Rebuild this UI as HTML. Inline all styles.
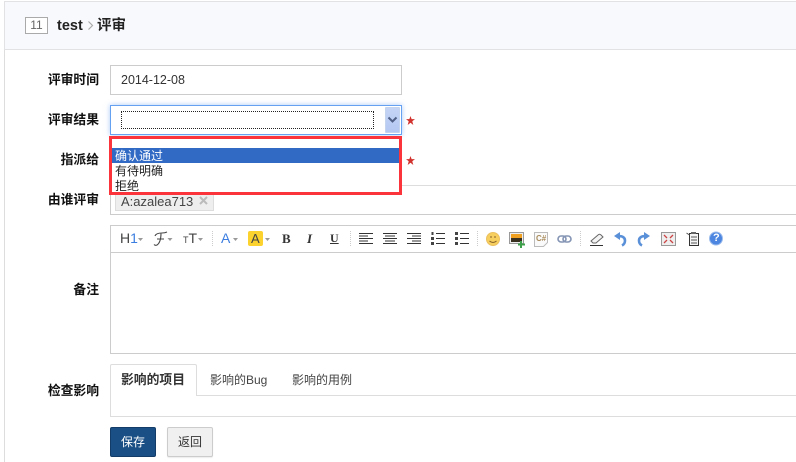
<!DOCTYPE html>
<html>
<head>
<meta charset="utf-8">
<style>
html,body{margin:0;padding:0;background:#fff}
body{width:796px;height:462px;position:relative;overflow:hidden;font-family:"Liberation Sans","Noto Sans CJK SC",sans-serif;font-size:12px;color:#333}
.a{position:absolute;box-sizing:border-box}
.l{position:absolute;font-weight:bold;color:#111;font-size:12.800px;line-height:16px;white-space:nowrap;right:697px}
.t{position:absolute;white-space:nowrap}
.ic{position:absolute;top:0;left:0}
</style>
</head>
<body>
<div class="a" style="left:4px;top:1px;width:792px;height:49px;background:#f8f9fd;border:1px solid #e2e2e4;border-right:0"></div>
<div class="a" style="left:4px;top:50px;width:1px;height:412px;background:#ddd"></div>
<div class="a" style="left:25px;top:17px;width:23px;height:17px;border:1px solid #aaa;background:#fff;color:#666;font-size:12px;line-height:15px;text-align:center">11</div>
<div class="t" style="left:57px;top:17px;font-size:14.500px;line-height:18px;font-weight:bold;color:#222">test</div>
<svg class="a" style="left:87px;top:20px" width="8" height="11" viewBox="0 0 8 11"><path d="M1.500 1.500L5.500 5.500L1.500 9.500" fill="none" stroke="#aaa" stroke-width="1.200"/></svg>
<div class="t" style="left:97px;top:17px;font-size:14.500px;line-height:18px;font-weight:bold;color:#222">评审</div>

<div class="l" style="top:72px">评审时间</div>
<div class="a" style="left:110px;top:65px;width:292px;height:30px;border:1px solid #ccc;background:#fff;font-size:12.500px;line-height:28px;padding-left:10px;color:#333">2014-12-08</div>

<div class="l" style="top:112px">评审结果</div>
<div class="a" style="left:110px;top:105px;width:292px;height:30px;border:1px solid #66a0f0;background:#fff;box-shadow:0 0 5px rgba(102,160,240,.55)"></div>
<div class="a" style="left:121px;top:111px;width:253px;height:18px;border:1px dotted #222"></div>
<div class="a" style="left:385px;top:107px;width:15px;height:26px;background:linear-gradient(#c4d4f6,#b4c8f2);border:1px solid #c4d3ee;border-radius:1px"></div>
<svg class="a" style="left:387px;top:116px" width="11" height="8" viewBox="0 0 11 8"><path d="M1.500 1.500L5.500 5.500L9.500 1.500" fill="none" stroke="#4f5f85" stroke-width="2"/></svg>
<svg class="a" style="left:406px;top:116px" width="9" height="9" viewBox="0 0 8 8"><path d="M4 0L5 2.800H8L5.600 4.700L6.500 8L4 6L1.500 8L2.400 4.700L0 2.800H3z" fill="#d2322d"/></svg>

<div class="l" style="top:152px">指派给</div>
<svg class="a" style="left:406px;top:156px" width="9" height="9" viewBox="0 0 8 8"><path d="M4 0L5 2.800H8L5.600 4.700L6.500 8L4 6L1.500 8L2.400 4.700L0 2.800H3z" fill="#d2322d"/></svg>
<div class="a" style="left:402px;top:185px;width:394px;height:1px;background:#ddd"></div>

<div class="a" style="left:109px;top:136px;width:293px;height:59px;background:#fff"></div>
<div class="a" style="left:112px;top:148px;width:287px;height:15px;background:#316ac5"></div>
<div class="t" style="left:115px;top:149px;font-size:12px;line-height:15px;color:#fff">确认通过</div>
<div class="t" style="left:115px;top:164px;font-size:12px;line-height:15px;color:#222">有待明确</div>
<div class="t" style="left:115px;top:179px;font-size:12px;line-height:15px;color:#222">拒绝</div>

<div class="l" style="top:192px">由谁评审</div>
<div class="a" style="left:110px;top:195px;width:686px;height:20px;border-left:1px solid #ccc;border-bottom:1px solid #ccc"></div>
<div class="a" style="left:115px;top:192px;width:99px;height:19px;background:#eee;border:1px solid #ddd;font-size:13px;line-height:17px;padding-left:5px;color:#444;overflow:hidden">A:azalea713</div>
<svg class="a" style="left:199px;top:196px" width="9" height="9" viewBox="0 0 9 9"><path d="M1 1L8 8M8 1L1 8" stroke="#bbb" stroke-width="2"/></svg>
<div class="a" style="left:109px;top:136px;width:293px;height:59px;border:3px solid #fb333a"></div>

<div class="l" style="top:282px">备注</div>
<div class="a" style="left:110px;top:225px;width:686px;height:129px;border:1px solid #ccc;border-right:0"></div>
<div class="a" style="left:111px;top:252px;width:685px;height:1px;background:#ccc"></div>

<!-- toolbar -->
<div class="t" style="left:120px;top:230px;font-size:14px;line-height:16px;color:#444">H<span style="color:#3b7de0">1</span></div>
<svg class="ic" width="796" height="462" style="pointer-events:none">
<g fill="#999">
<path d="M138 238h5l-2.500 3z"/><path d="M167.500 238h5l-2.500 3z"/><path d="M198 238h5l-2.500 3z"/><path d="M233 238h5l-2.500 3z"/><path d="M265 238h5l-2.500 3z"/>
</g>
<path d="M155 236c1-3 5-3 7-3s3 0 5-1M161 233c0 5-1 10-4 12-1 .5-2 .5-3-.5M157 239h7" fill="none" stroke="#444" stroke-width="1.100"/>
<g stroke="#ccc" stroke-dasharray="1 1" stroke-width="1"><path d="M212.500 231v16M350.500 231v16M477.500 231v16M580.500 231v16"/></g>
<rect x="248" y="231" width="15" height="15" rx="2" fill="#fcd22e"/>
<g stroke="#333" stroke-width="1" fill="none">
<path d="M359 233.500h14M359 236h9M359 238.500h14M359 241h9M359 243.500h14"/>
<path d="M383 233.500h14M385 236h10M383 238.500h14M385 241h10M383 243.500h14"/>
<path d="M407 233.500h14M412 236h9M407 238.500h14M412 241h9M407 243.500h14"/>
<path d="M436 233.500h9M436 238.500h9M436 243.500h9"/>
<path d="M460 233.500h9M460 238.500h9M460 243.500h9"/>
</g>
<g fill="#444"><rect x="431.500" y="232" width="2" height="3"/><rect x="431" y="237" width="3" height="3"/><rect x="431" y="242" width="3" height="3"/><rect x="455" y="232" width="3" height="3"/><rect x="455" y="237" width="3" height="3"/><rect x="455" y="242" width="3" height="3"/></g>
<circle cx="493" cy="239" r="6.500" fill="#f6cf5e" stroke="#ecc060" stroke-width="1"/>
<path d="M489.500 241q3.500 3 7 0" fill="none" stroke="#85602a"/><path d="M491 236v2M495 236v2" stroke="#85602a"/>
<rect x="509.500" y="232.500" width="14" height="11" fill="#eee" stroke="#999"/>
<rect x="511" y="234" width="11" height="4" fill="#f0a020"/><rect x="511" y="238" width="11" height="4" fill="#3a3020"/>
<path d="M521 241v7M518 244.500h7" stroke="#3ea04a" stroke-width="2"/>
<path d="M534.500 232.500h13v10l-4 4h-9z" fill="#fafafa" stroke="#bbb"/>
<rect x="558" y="236" width="8" height="6" rx="3" fill="none" stroke="#8494b4" stroke-width="1.600"/>
<rect x="563" y="236" width="8" height="6" rx="3" fill="none" stroke="#8494b4" stroke-width="1.600"/>
<path d="M591 241l7-6c1-1 2-1 3 0l2 2-7 6h-3z" fill="#f4f4f4" stroke="#666"/><path d="M590 245.500h13" stroke="#333"/>
<path d="M618 236.500c4-1 7 1 7 4 0 2-1 4-3 5" fill="none" stroke="#5a90d8" stroke-width="2.600"/><path d="M614 236l6-4v8z" fill="#5a90d8"/>
<path d="M646 236.500c-4-1-7 1-7 4 0 2 1 4 3 5" fill="none" stroke="#5a90d8" stroke-width="2.600"/><path d="M650 236l-6-4v8z" fill="#5a90d8"/>
<rect x="661.500" y="232.500" width="14" height="13" fill="#eee" stroke="#999"/>
<path d="M664 235l3 3M673 235l-3 3M664 243l3-3M673 243l-3-3" stroke="#c44" stroke-width="1.300"/>
<path d="M689.500 233.500h9v12h-9z" fill="#f5f5f5" stroke="#333"/><path d="M691 237h6M691 240h6M691 243h6" stroke="#555"/><path d="M686.500 233l3 2" stroke="#555"/><rect x="691" y="232" width="5" height="2" fill="#666"/>
<circle cx="716" cy="238.500" r="6.500" fill="#4c86e0" stroke="#9cbcec" stroke-width="1"/>
</svg>
<div class="t" style="left:183px;top:230px;font-size:14px;line-height:16px;color:#444"><span style="font-size:9px">T</span>T</div>
<div class="t" style="left:221px;top:230px;font-size:14px;line-height:16px;color:#3b7de0">A</div>
<div class="t" style="left:251px;top:231px;font-size:13px;line-height:15px;color:#444">A</div>
<div class="t" style="left:282px;top:231px;font-family:'Liberation Serif',serif;font-weight:bold;font-size:13px;line-height:15px;color:#333">B</div>
<div class="t" style="left:307px;top:231px;font-family:'Liberation Serif',serif;font-weight:bold;font-style:italic;font-size:13px;line-height:15px;color:#333">I</div>
<div class="t" style="left:330px;top:231px;font-family:'Liberation Serif',serif;font-weight:bold;font-size:12px;line-height:15px;color:#333;text-decoration:underline">U</div>
<div class="t" style="left:536px;top:234px;font-size:8px;line-height:10px;color:#a88a5a;font-weight:bold">C#</div>
<div class="t" style="left:713px;top:232px;font-size:11px;line-height:13px;color:#fff;font-weight:bold">?</div>

<div class="l" style="top:383px">检查影响</div>
<div class="a" style="left:110px;top:395px;width:686px;height:22px;border-left:1px solid #ddd;border-bottom:1px solid #ddd"></div>
<div class="a" style="left:197px;top:395px;width:599px;height:1px;background:#ddd"></div>
<div class="a" style="left:110px;top:364px;width:87px;height:32px;background:#fff;border:1px solid #ddd;border-bottom:0;border-radius:2px 2px 0 0;font-weight:bold;font-size:12.800px;line-height:29px;padding-left:10px;color:#333;white-space:nowrap">影响的项目</div>
<div class="t" style="left:210px;top:372px;font-size:12px;line-height:16px;color:#444">影响的Bug</div>
<div class="t" style="left:292px;top:372px;font-size:12px;line-height:16px;color:#444">影响的用例</div>

<div class="a" style="left:110px;top:427px;width:46px;height:30px;background:#1a4f85;border:1px solid #133d68;border-radius:2px;color:#fff;font-size:12px;line-height:28px;text-align:center">保存</div>
<div class="a" style="left:167px;top:427px;width:46px;height:30px;background:#f0f0f0;border:1px solid #ccc;border-radius:2px;color:#333;font-size:12px;line-height:28px;text-align:center;box-shadow:0 1px 1px rgba(0,0,0,.08)">返回</div>
</body>
</html>
